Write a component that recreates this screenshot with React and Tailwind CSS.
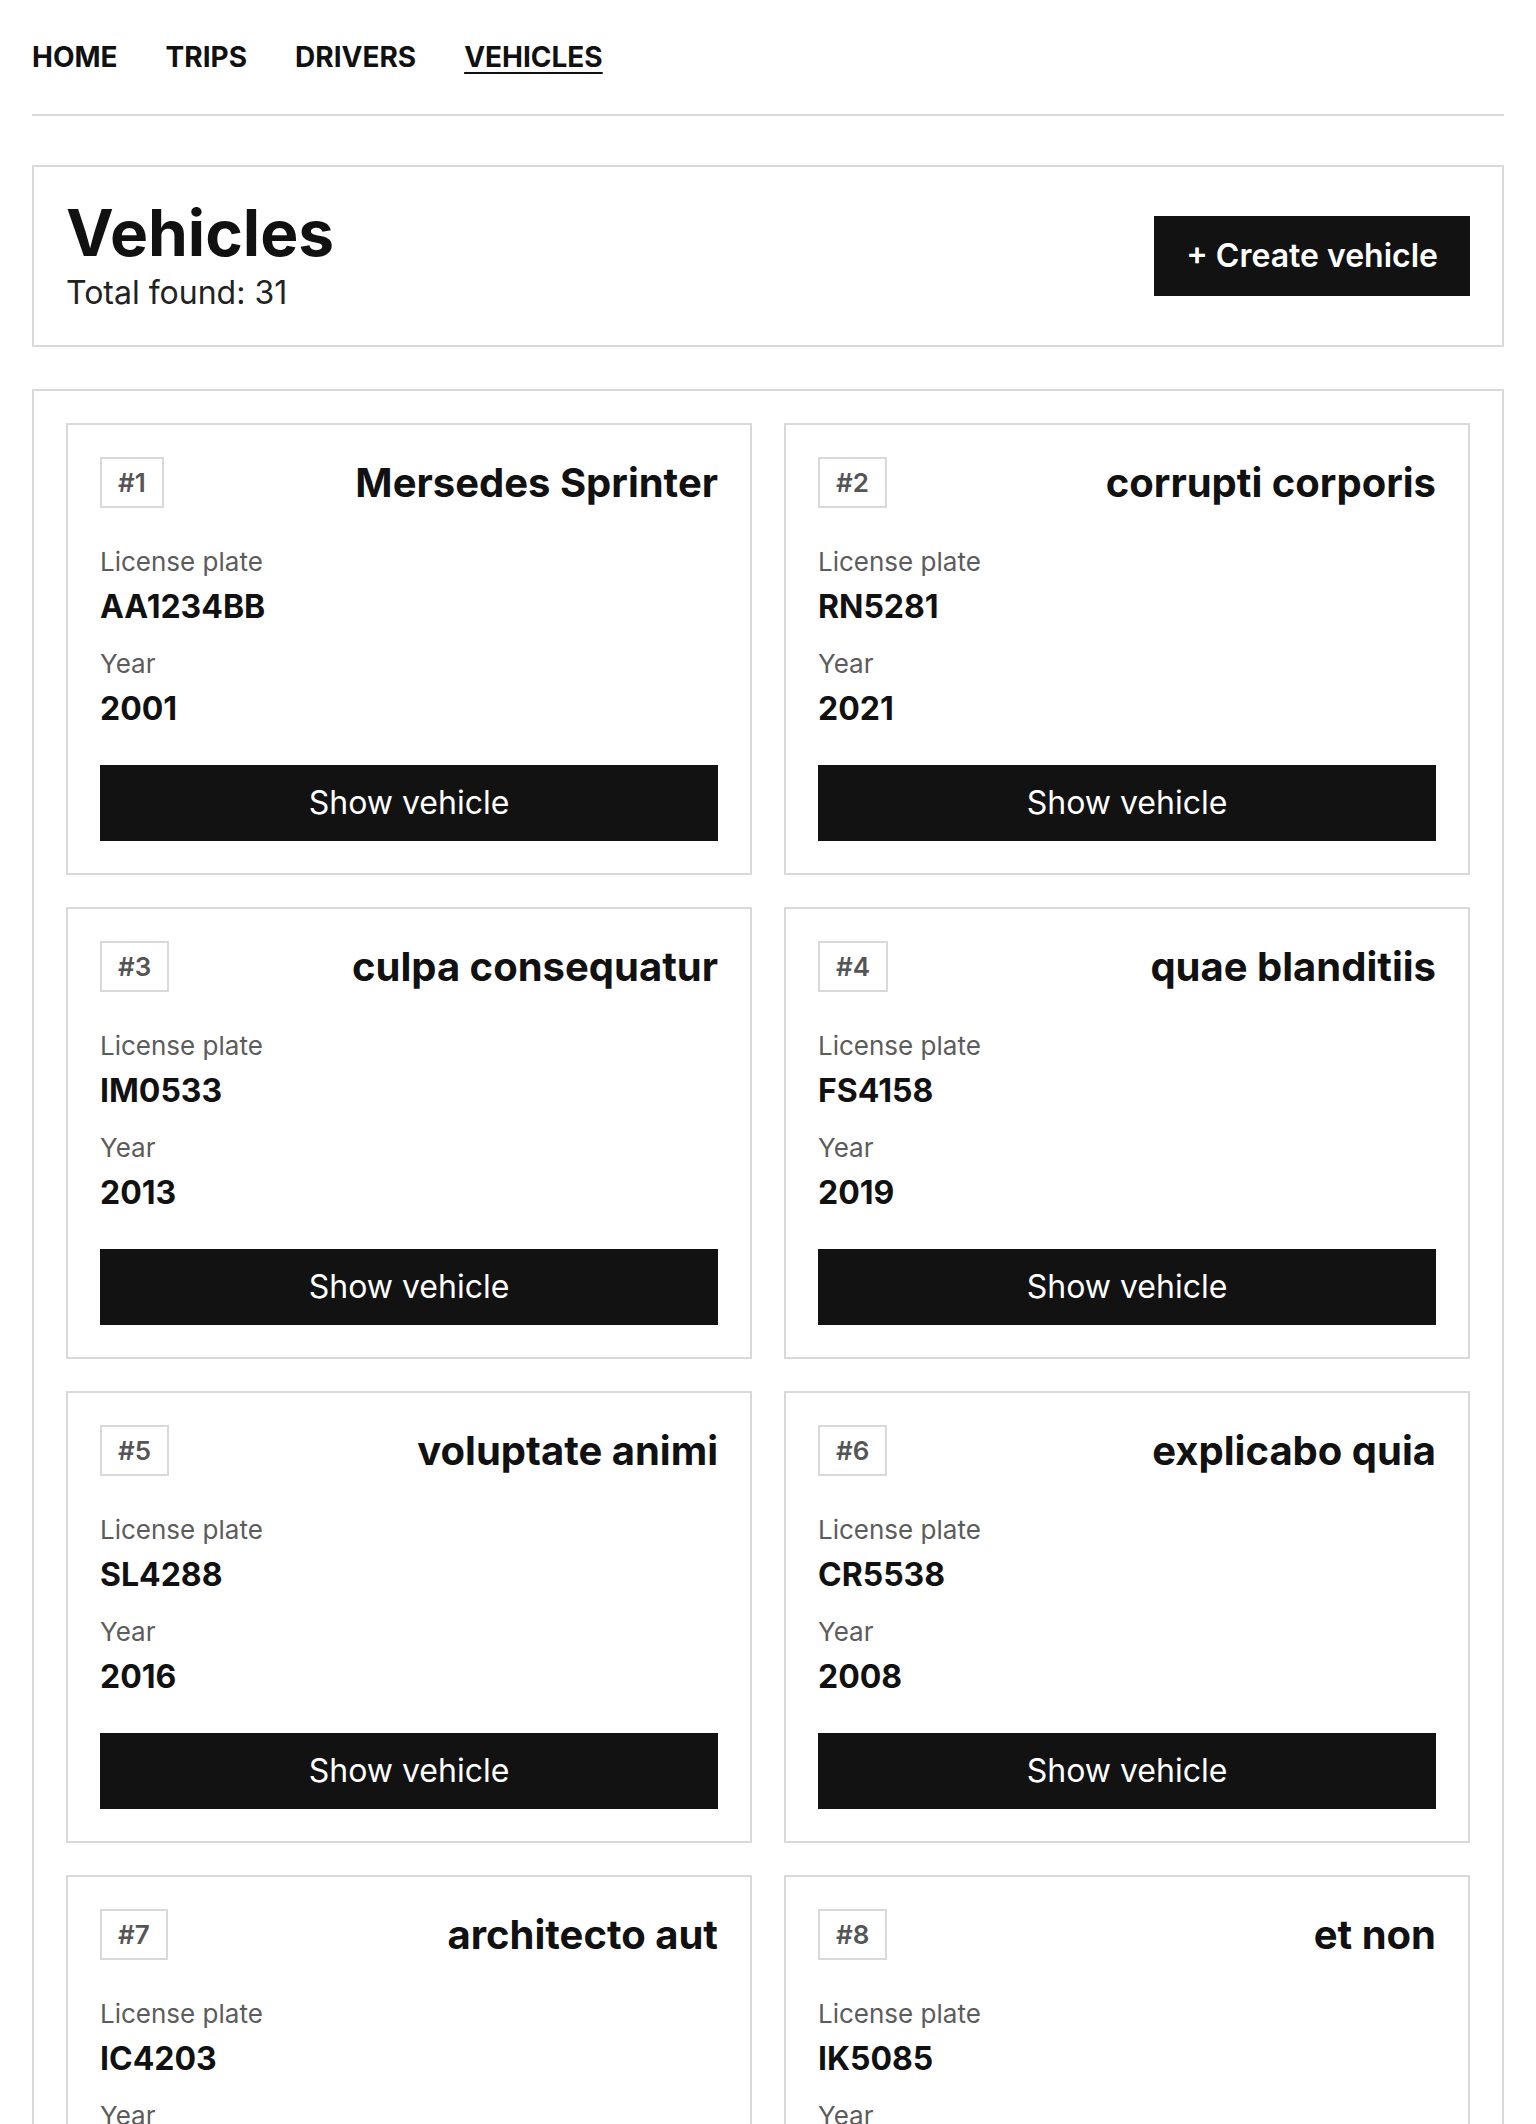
import React from "react";

const vehicles = [
  { id: 1, name: "Mersedes Sprinter", plate: "AA1234BB", year: 2001 },
  { id: 2, name: "corrupti corporis", plate: "RN5281", year: 2021 },
  { id: 3, name: "culpa consequatur", plate: "IM0533", year: 2013 },
  { id: 4, name: "quae blanditiis", plate: "FS4158", year: 2019 },
  { id: 5, name: "voluptate animi", plate: "SL4288", year: 2016 },
  { id: 6, name: "explicabo quia", plate: "CR5538", year: 2008 },
  { id: 7, name: "architecto aut", plate: "IC4203", year: 2011 },
  { id: 8, name: "et non", plate: "IK5085", year: 2004 },
];

const links = ["HOME", "TRIPS", "DRIVERS", "VEHICLES"];

const VehicleCard = ({ vehicle }) => {
  return (
    <div className="border-2 border-[#d9d9d9] p-[32px] flex flex-col">
      <div className="flex items-center justify-between">
        <span className="border-2 border-[#d9d9d9] px-[16px] py-[6px] text-[26px] leading-[35px] font-semibold text-[#555]">
          #{vehicle.id}
        </span>
        <h2 className="text-[40px] leading-[48px] font-bold text-[#111]">{vehicle.name}</h2>
      </div>
      <div className="mt-[33px]">
        <p className="text-[26px] leading-[42px] text-[#5c5c5c]">License plate</p>
        <p className="text-[32px] leading-[48px] font-bold text-[#111]">{vehicle.plate}</p>
      </div>
      <div className="mt-[12px]">
        <p className="text-[26px] leading-[42px] text-[#5c5c5c]">Year</p>
        <p className="text-[32px] leading-[48px] font-bold text-[#111]">{vehicle.year}</p>
      </div>
      <button className="mt-[32px] bg-[#121212] text-white text-[32px] leading-[48px] py-[14px] w-full">
        Show vehicle
      </button>
    </div>
  );
};

export default function App() {
  return (
    <div className="min-h-screen bg-white px-[32px] text-[#111]" style={{ fontFamily: "Inter, 'Noto Sans', sans-serif" }}>
      <nav className="pt-[36px] pb-[36px] border-b-2 border-[#d9d9d9] flex gap-[48px]">
        {links.map((link) => (
          <a
            key={link}
            href="#"
            className={
              link === "VEHICLES"
                ? "text-[28px] leading-[42px] font-bold underline underline-offset-[5px] decoration-2"
                : "text-[28px] leading-[42px] font-bold"
            }
          >
            {link}
          </a>
        ))}
      </nav>

      <section className="mt-[49px] border-2 border-[#d9d9d9] px-[32px] pt-[30px] pb-[28px] flex items-center justify-between">
        <div>
          <h1 className="text-[64px] leading-[72px] font-bold">Vehicles</h1>
          <p className="text-[32px] leading-[48px] text-[#222]">Total found: 31</p>
        </div>
        <button className="bg-[#121212] text-white text-[32px] leading-[48px] font-semibold px-[32px] py-[16px] -mt-[2px]">
          + Create vehicle
        </button>
      </section>

      <section className="mt-[42px] border-2 border-[#d9d9d9] p-[32px] grid grid-cols-2 gap-[32px]">
        {vehicles.map((vehicle) => (
          <VehicleCard key={vehicle.id} vehicle={vehicle} />
        ))}
      </section>
    </div>
  );
}
